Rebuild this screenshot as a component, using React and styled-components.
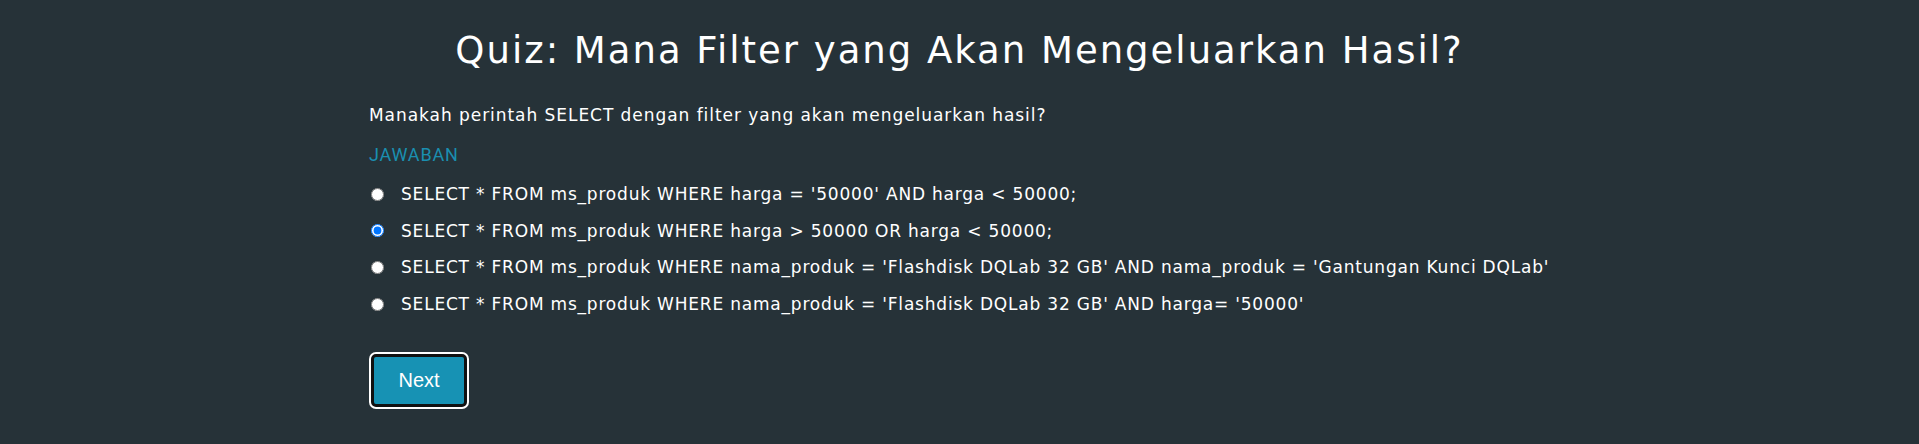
import React, { useState } from "react";
import styled, { createGlobalStyle } from "styled-components";

const Global = createGlobalStyle`
  html, body { margin: 0; padding: 0; background: #263238; }
  body { font-family: "DejaVu Sans", "Open Sans", sans-serif; color: #ffffff; }
`;

const Page = styled.main`
  min-height: 444px;
  background: #263238;
  box-sizing: border-box;
  padding-top: 26px;
`;

const Container = styled.div`
  max-width: 1181px;
  margin: 0 auto;
`;

const Title = styled.h1`
  margin: 0 0 28px;
  text-align: center;
  font-size: 37px;
  font-weight: 400;
  line-height: 50px;
  letter-spacing: 2px;
  color: #ffffff;
`;

const Question = styled.p`
  margin: 0 0 16px;
  font-size: 17px;
  line-height: 23px;
  letter-spacing: 0.95px;
`;

const AnswerLabel = styled.div`
  font-family: Roboto, "Liberation Sans", sans-serif;
  color: #1a8fb0;
  font-size: 18px;
  line-height: 24px;
  letter-spacing: 0.8px;
  margin-bottom: 15px;
`;

const Options = styled.div`
  display: flex;
  flex-direction: column;
  gap: 12.7px;
`;

const Option = styled.label`
  display: flex;
  align-items: center;
  height: 24px;
  font-size: 17px;
  letter-spacing: 0.8px;
  white-space: nowrap;
  cursor: pointer;
`;

const Radio = styled.input.attrs({ type: "radio" })`
  width: 13px;
  height: 13px;
  margin: 0 17px 0 2px;
  flex: none;
`;

const NextButton = styled.button`
  margin-top: 38px;
  box-sizing: border-box;
  width: 96px;
  height: 53px;
  margin-left: 2px;
  border: 3px solid #111;
  border-radius: 5px;
  box-shadow: 0 0 0 2px #ffffff;
  background: #1792b4;
  color: #ffffff;
  font-family: "Liberation Sans", Arial, sans-serif;
  font-size: 20px;
  cursor: pointer;
`;

const options = [
  "SELECT * FROM ms_produk WHERE harga = '50000' AND harga < 50000;",
  "SELECT * FROM ms_produk WHERE harga > 50000 OR harga < 50000;",
  "SELECT * FROM ms_produk WHERE nama_produk = 'Flashdisk DQLab 32 GB' AND nama_produk = 'Gantungan Kunci DQLab'",
  "SELECT * FROM ms_produk WHERE nama_produk = 'Flashdisk DQLab 32 GB' AND harga= '50000'",
];

export default function App() {
  const [choice, setChoice] = useState(1);
  return (
    <Page>
      <Global />
      <Container>
        <Title>Quiz: Mana Filter yang Akan Mengeluarkan Hasil?</Title>
        <Question>Manakah perintah SELECT dengan filter yang akan mengeluarkan hasil?</Question>
        <AnswerLabel>JAWABAN</AnswerLabel>
        <Options>
          {options.map((o, i) => (
            <Option key={i}>
              <Radio name="q" checked={choice === i} onChange={() => setChoice(i)} />
              {o}
            </Option>
          ))}
        </Options>
        <NextButton>Next</NextButton>
      </Container>
    </Page>
  );
}
